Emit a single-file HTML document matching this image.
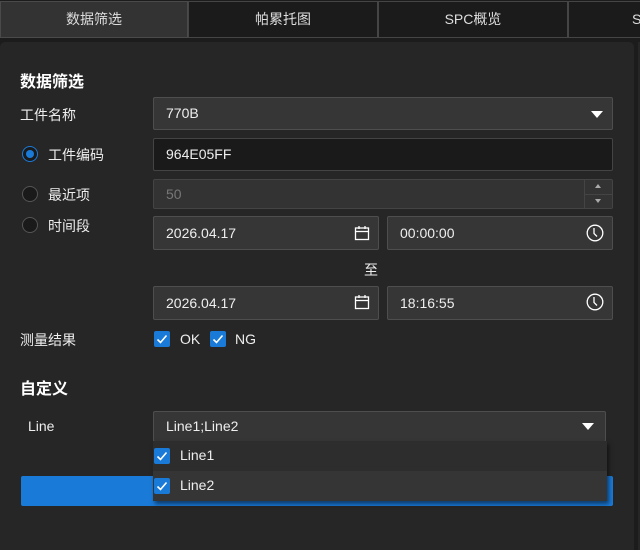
<!DOCTYPE html>
<html><head><meta charset="utf-8"><style>
*{box-sizing:border-box;margin:0;padding:0}
html,body{width:640px;height:550px;overflow:hidden}
body{background:#1c1c1c;font-family:"Liberation Sans","Noto Sans CJK SC",sans-serif;color:#e8e8e8;font-size:14px;position:relative}
.a{position:absolute}
.tab{position:absolute;top:1px;height:37px;background:#1b1b1b;border:1px solid #454545;color:#ddd;text-align:center;line-height:35px;font-size:14px;overflow:hidden;white-space:nowrap}
.panel{position:absolute;left:0;top:42px;width:634px;height:508px;background:#262626;border-radius:5px 5px 0 0}
.lbl{position:absolute;font-size:14px;color:#eee}
.box{position:absolute;background:#363636;border:1px solid #4e4e4e;border-radius:2px;padding-left:12px;font-size:14px;color:#eee}
.radio{position:absolute;width:16px;height:16px;border-radius:50%;border:1.5px solid #555;background:#1a1a1a}
.cb{position:absolute;width:16px;height:16px;background:#1a7ad8;border-radius:2px}
.tri{position:absolute;width:0;height:0;border-left:6px solid transparent;border-right:6px solid transparent;border-top:7px solid #fff}
</style></head><body>
<div class="tab" style="left:0;width:188px;background:#333;border-color:#4a4a4a">数据筛选</div>
<div class="tab" style="left:188px;width:190px">帕累托图</div>
<div class="tab" style="left:378px;width:190px">SPC概览</div>
<div class="tab" style="left:568px;width:80px;text-align:left;padding-left:63px">SPC</div>
<div class="a" style="left:638px;top:42px;width:2px;height:508px;background:#262626"></div>
<div class="panel"></div>

<div class="lbl" style="left:20px;top:68px;font-size:16px;font-weight:bold;color:#fff">数据筛选</div>
<div class="lbl" style="left:20px;top:105px">工件名称</div>
<div class="box" style="left:153px;top:97px;width:460px;height:33px;line-height:31px">770B</div>
<div class="tri" style="left:591px;top:111px"></div>

<div class="radio" style="left:22px;top:146px;border-color:#1a7ad8;background:#1a1a1a"></div>
<div class="a" style="left:26px;top:150px;width:8px;height:8px;border-radius:50%;background:#1a7ad8"></div>
<div class="lbl" style="left:48px;top:145px">工件编码</div>
<div class="box" style="left:153px;top:138px;width:460px;height:33px;line-height:31px;background:#1a1a1a;border-color:#444">964E05FF</div>

<div class="radio" style="left:22px;top:186px"></div>
<div class="lbl" style="left:48px;top:185px">最近项</div>
<div class="box" style="left:153px;top:179px;width:460px;height:30px;line-height:28px;color:#777;border-color:#444;background:#333">50</div>
<div class="a" style="left:584px;top:180px;width:1px;height:28px;background:#444"></div>
<div class="a" style="left:585px;top:194px;width:27px;height:1px;background:#444"></div>
<div class="a" style="left:595px;top:184px;border-left:3px solid transparent;border-right:3px solid transparent;border-bottom:4px solid #aaa"></div>
<div class="a" style="left:595px;top:199px;border-left:3px solid transparent;border-right:3px solid transparent;border-top:4px solid #aaa"></div>

<div class="radio" style="left:22px;top:217px"></div>
<div class="lbl" style="left:48px;top:216px">时间段</div>

<div class="box" style="left:153px;top:216px;width:226px;height:34px;line-height:32px">2026.04.17</div>
<svg class="a" style="left:354px;top:225px" width="16" height="16" viewBox="0 0 16 16"><rect x="1.5" y="3" width="13" height="11.5" fill="none" stroke="#fff" stroke-width="1.3"/><line x1="1.5" y1="6.5" x2="14.5" y2="6.5" stroke="#fff" stroke-width="1.3"/><line x1="5" y1="1" x2="5" y2="4" stroke="#fff" stroke-width="1.3"/><line x1="11" y1="1" x2="11" y2="4" stroke="#fff" stroke-width="1.3"/></svg>
<div class="box" style="left:387px;top:216px;width:226px;height:34px;line-height:32px">00:00:00</div>
<svg class="a" style="left:586px;top:224px" width="18" height="18" viewBox="0 0 18 18"><circle cx="9" cy="9" r="7.8" fill="none" stroke="#fff" stroke-width="1.3"/><path d="M8 4v5.5l3 3" fill="none" stroke="#fff" stroke-width="1.3"/></svg>

<div class="lbl" style="left:364px;top:260px">至</div>

<div class="box" style="left:153px;top:286px;width:226px;height:34px;line-height:32px">2026.04.17</div>
<svg class="a" style="left:354px;top:294px" width="16" height="16" viewBox="0 0 16 16"><rect x="1.5" y="3" width="13" height="11.5" fill="none" stroke="#fff" stroke-width="1.3"/><line x1="1.5" y1="6.5" x2="14.5" y2="6.5" stroke="#fff" stroke-width="1.3"/><line x1="5" y1="1" x2="5" y2="4" stroke="#fff" stroke-width="1.3"/><line x1="11" y1="1" x2="11" y2="4" stroke="#fff" stroke-width="1.3"/></svg>
<div class="box" style="left:387px;top:286px;width:226px;height:34px;line-height:32px">18:16:55</div>
<svg class="a" style="left:586px;top:293px" width="18" height="18" viewBox="0 0 18 18"><circle cx="9" cy="9" r="7.8" fill="none" stroke="#fff" stroke-width="1.3"/><path d="M8 4v5.5l3 3" fill="none" stroke="#fff" stroke-width="1.3"/></svg>

<div class="lbl" style="left:20px;top:330px">测量结果</div>
<div class="cb" style="left:154px;top:331px"></div>
<svg class="a" style="left:154px;top:331px" width="16" height="16"><path d="M3.5 8.5l3 3 6-7" fill="none" stroke="#fff" stroke-width="1.6"/></svg>
<div class="lbl" style="left:180px;top:331px">OK</div>
<div class="cb" style="left:210px;top:331px"></div>
<svg class="a" style="left:210px;top:331px" width="16" height="16"><path d="M3.5 8.5l3 3 6-7" fill="none" stroke="#fff" stroke-width="1.6"/></svg>
<div class="lbl" style="left:235px;top:331px">NG</div>

<div class="lbl" style="left:20px;top:375px;font-size:16px;font-weight:bold;color:#fff">自定义</div>
<div class="lbl" style="left:28px;top:418px">Line</div>
<div class="box" style="left:153px;top:411px;width:453px;height:31px;line-height:29px">Line1;Line2</div>
<div class="tri" style="left:582px;top:423px"></div>

<div class="a" style="left:21px;top:476px;width:592px;height:30px;background:#1a7ad8;border-radius:2px"></div>
<div class="a" style="left:153px;top:441px;width:454px;height:60px;background:#2d2d2d;box-shadow:2px 3px 4px rgba(0,0,0,.5)"></div>
<div class="a" style="left:153px;top:471px;width:454px;height:30px;background:#353535"></div>
<div class="cb" style="left:154px;top:448px"></div>
<svg class="a" style="left:154px;top:448px" width="16" height="16"><path d="M3.5 8.5l3 3 6-7" fill="none" stroke="#fff" stroke-width="1.6"/></svg>
<div class="lbl" style="left:180px;top:447px">Line1</div>
<div class="cb" style="left:154px;top:478px"></div>
<svg class="a" style="left:154px;top:478px" width="16" height="16"><path d="M3.5 8.5l3 3 6-7" fill="none" stroke="#fff" stroke-width="1.6"/></svg>
<div class="lbl" style="left:180px;top:477px">Line2</div>
</body></html>
